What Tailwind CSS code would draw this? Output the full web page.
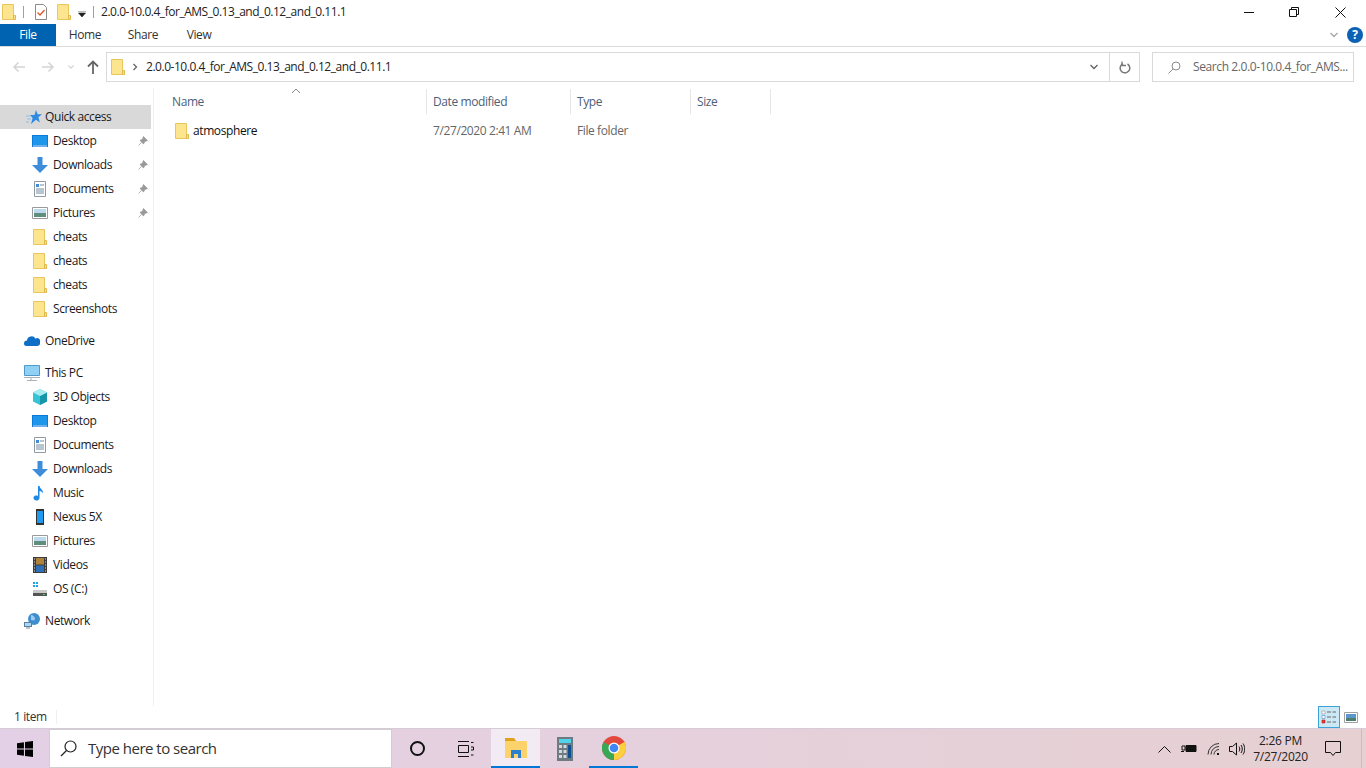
<!DOCTYPE html>
<html lang="en">
<head>
<meta charset="UTF-8">
<title>2.0.0-10.0.4_for_AMS_0.13_and_0.12_and_0.11.1</title>
<script src="https://cdn.jsdelivr.net/npm/@tailwindcss/browser@4"></script>
</head>
<body class="w-[1366px] h-[768px] overflow-hidden bg-white font-['Open_Sans','Noto_Sans',sans-serif] text-[12px] tracking-[-0.4px] text-[#1a1a1a] flex flex-col">
<svg class="hidden">
  <symbol id="folder" viewBox="0 0 16 16"><path d="M1.5.5h11v15h-11z" fill="#fde58f" stroke="#e9c65c"/><path d="M12.5 11.5h2v4h-2z" fill="#fbe08a" stroke="#e0b94e"/></symbol>
  <symbol id="desktop" viewBox="0 0 16 16"><path d="M0 2h16v12H0z" fill="#0a7bd8"/><path d="M1 3h14v9H1z" fill="#1d96ec"/><path d="M1 13h14" stroke="#d6eaf8"/></symbol>
  <symbol id="down" viewBox="0 0 16 16"><path d="M5.5 0h5v8H16l-8 8-8-8h5.500z" fill="#3d8ddb"/></symbol>
  <symbol id="docs" viewBox="0 0 16 16"><path d="M2.500.5h11v15h-11z" fill="#fff" stroke="#8f9aa3"/><path d="M4 3h3v3H4z" fill="#3d8ddb"/><path d="M8 4h4M4 8h8M4 10h8M4 12h8" stroke="#6f8ba3"/></symbol>
  <symbol id="pics" viewBox="0 0 16 16"><path d="M.5 2.500h15v11H.5z" fill="#fff" stroke="#9a9a9a"/><path d="M2 4h12v4H2z" fill="#bcd9ee"/><path d="M2 8h12v4H2z" fill="#5f8f7c"/></symbol>
  <symbol id="pin" viewBox="0 0 10 10"><path d="M5.500 0.500 9.500 4.500 8.500 5 7.500 5 6 7 5.500 8 2 4.500 3 4 5 2.500 5 1.500zM3.500 6.500 0.500 9.500" fill="#9a9a9a" stroke="#9a9a9a" stroke-width=".7"/></symbol>
  <symbol id="chev" viewBox="0 0 10 10"><path d="M1.500 3 5 6.500 8.500 3" fill="none" stroke="currentColor" stroke-width="1.400"/></symbol>
</svg>

<!-- title bar -->
<div class="h-[24px] shrink-0 flex items-center relative">
  <svg class="w-[16px] h-[16px] ml-[1px]"><use href="#folder"/></svg>
  <div class="w-px h-[12px] bg-[#a0a0a0] ml-[6px]"></div>
  <svg class="w-[16px] h-[16px] ml-[9px]" viewBox="0 0 16 16"><path d="M2.500.5h8l3 3v12h-11z" fill="#fff" stroke="#8a8a8a"/><path d="M4.500 8.500 7 11l4.500-5" fill="none" stroke="#e0562a" stroke-width="1.300"/></svg>
  <svg class="w-[16px] h-[16px] ml-[7px]"><use href="#folder"/></svg>
  <svg class="w-[8px] h-[6px] ml-[6px] mt-[3px]" viewBox="0 0 8 6"><path d="M0 0h8M.5 2h7L4 6z" fill="#222" stroke="#222" stroke-width=".6"/></svg>
  <div class="w-px h-[12px] bg-[#a0a0a0] ml-[7px]"></div>
  <span class="ml-[7px] tracking-[-0.47px] text-[#222]">2.0.0-10.0.4_for_AMS_0.13_and_0.12_and_0.11.1</span>
  <div class="ml-auto flex items-center text-[#111]">
    <svg class="w-[10px] h-[10px] mr-[35px]" viewBox="0 0 10 10"><path d="M0 5.500h10" stroke="#111"/></svg>
    <svg class="w-[10px] h-[10px] mr-[36px]" viewBox="0 0 10 10"><path d="M.5 2.500h7v7h-7zM2.500 2.500v-2h7v7h-2" fill="none" stroke="#111"/></svg>
    <svg class="w-[11px] h-[11px] mr-[20px]" viewBox="0 0 11 11"><path d="M.5.5l10 10M10.500.5l-10 10" stroke="#111"/></svg>
  </div>
</div>

<!-- ribbon tabs -->
<div class="h-[23px] shrink-0 flex items-stretch border-b border-[#dadada] relative">
  <div class="w-[56px] bg-[#0063b1] text-white flex items-center justify-center">File</div>
  <div class="w-[58px] flex items-center justify-center text-[#333]">Home</div>
  <div class="w-[58px] flex items-center justify-center text-[#333]">Share</div>
  <div class="w-[54px] flex items-center justify-center text-[#333]">View</div>
  <div class="ml-auto flex items-center pr-[3px]">
    <svg class="w-[10px] h-[10px] text-[#a8a8a8] mr-[8px]"><use href="#chev"/></svg>
    <div class="w-[16px] h-[16px] rounded-full bg-[#0b62b5] text-white flex items-center justify-center font-bold text-[12px]">?</div>
  </div>
</div>

<!-- address row -->
<div class="h-[41px] shrink-0 flex items-start pt-[5px]">
  <div class="w-[106px] h-[30px] shrink-0 flex items-center">
    <svg class="w-[14px] h-[12px] ml-[12px] text-[#d4d4d4]" viewBox="0 0 14 12"><path d="M13 6H2M6.500 1.500 2 6l4.500 4.500" fill="none" stroke="currentColor" stroke-width="1.500"/></svg>
    <svg class="w-[14px] h-[12px] ml-[15px] text-[#d4d4d4]" viewBox="0 0 14 12"><path d="M1 6h11M7.500 1.500 12 6l-4.500 4.500" fill="none" stroke="currentColor" stroke-width="1.500"/></svg>
    <svg class="w-[8px] h-[8px] ml-[12px] text-[#d4d4d4]"><use href="#chev"/></svg>
    <svg class="w-[12px] h-[14px] ml-[12px] text-[#666]" viewBox="0 0 12 14"><path d="M6 14V2M1 6.500 6 1.500l5 5" fill="none" stroke="currentColor" stroke-width="1.800"/></svg>
  </div>
  <div class="w-[1034px] h-[30px] border border-[#d9d9d9] flex items-center">
    <svg class="w-[16px] h-[16px] ml-[3px]"><use href="#folder"/></svg>
    <svg class="w-[6px] h-[8px] ml-[6px]" viewBox="0 0 6 8"><path d="M1.500 1 4.500 4l-3 3" fill="none" stroke="#666" stroke-width="1.300"/></svg>
    <span class="ml-[8px] tracking-[-0.47px] text-[#222]">2.0.0-10.0.4_for_AMS_0.13_and_0.12_and_0.11.1</span>
    <svg class="w-[10px] h-[10px] ml-auto mr-[10px] text-[#666]"><use href="#chev"/></svg>
    <div class="w-[30px] h-full border-l border-[#d9d9d9] flex items-center justify-center">
      <svg class="w-[12px] h-[13px]" viewBox="0 0 12 13"><path d="M4 2.700A4.800 4.800 0 1 0 8.500 3" fill="none" stroke="#777" stroke-width="1.500"/><path d="M3 .5v4h4" fill="none" stroke="#777" stroke-width="1.300"/></svg>
    </div>
  </div>
  <div class="w-[202px] h-[30px] ml-[12px] border border-[#d9d9d9] flex items-center">
    <svg class="w-[13px] h-[13px] ml-[15px]" viewBox="0 0 13 13"><circle cx="8" cy="5" r="4" fill="none" stroke="#8a8a8a"/><path d="M5 8 .5 12.500" stroke="#8a8a8a"/></svg>
    <span class="ml-[12px] text-[#666]">Search 2.0.0-10.0.4_for_AMS...</span>
  </div>
</div>

<!-- body -->
<div class="flex-1 flex min-h-0">
  <nav class="w-[154px] shrink-0 border-r border-[#f0f0f0] pt-[17px] text-[#1a1a1a]">
    <div class="w-[151px] h-[24px] bg-[#d9d9d9] flex items-center pl-[26px]">
      <svg class="w-[16px] h-[16px]" viewBox="0 0 16 16"><path d="M10 1l1.600 4.300H16L12.400 8.300 13.800 13.500 10 10.800 5 15 6.600 9 4 6h4.500z" fill="#2f8be0"/><path d="M0 7h4M1 10h4M0 13h3" stroke="#8cc0ee"/></svg>
      <span class="ml-[3px]">Quick access</span>
    </div>
    <div class="h-[24px] flex items-center pl-[32px]"><svg class="w-[16px] h-[16px]"><use href="#desktop"/></svg><span class="ml-[5px]">Desktop</span><svg class="w-[10px] h-[10px] ml-auto mr-[5px]"><use href="#pin"/></svg></div>
    <div class="h-[24px] flex items-center pl-[32px]"><svg class="w-[16px] h-[16px]"><use href="#down"/></svg><span class="ml-[5px]">Downloads</span><svg class="w-[10px] h-[10px] ml-auto mr-[5px]"><use href="#pin"/></svg></div>
    <div class="h-[24px] flex items-center pl-[32px]"><svg class="w-[16px] h-[16px]"><use href="#docs"/></svg><span class="ml-[5px]">Documents</span><svg class="w-[10px] h-[10px] ml-auto mr-[5px]"><use href="#pin"/></svg></div>
    <div class="h-[24px] flex items-center pl-[32px]"><svg class="w-[16px] h-[16px]"><use href="#pics"/></svg><span class="ml-[5px]">Pictures</span><svg class="w-[10px] h-[10px] ml-auto mr-[5px]"><use href="#pin"/></svg></div>
    <div class="h-[24px] flex items-center pl-[32px]"><svg class="w-[16px] h-[16px]"><use href="#folder"/></svg><span class="ml-[5px]">cheats</span></div>
    <div class="h-[24px] flex items-center pl-[32px]"><svg class="w-[16px] h-[16px]"><use href="#folder"/></svg><span class="ml-[5px]">cheats</span></div>
    <div class="h-[24px] flex items-center pl-[32px]"><svg class="w-[16px] h-[16px]"><use href="#folder"/></svg><span class="ml-[5px]">cheats</span></div>
    <div class="h-[24px] flex items-center pl-[32px]"><svg class="w-[16px] h-[16px]"><use href="#folder"/></svg><span class="ml-[5px]">Screenshots</span></div>

    <div class="h-[24px] mt-[8px] flex items-center pl-[24px]">
      <svg class="w-[16px] h-[16px]" viewBox="0 0 16 16"><path d="M0 10.500A3 3 0 0 1 3 7.500 4.500 4.500 0 0 1 11.500 5.800 3 3 0 0 1 16 9.500 2.800 2.800 0 0 1 13.500 13H2.500A2.500 2.500 0 0 1 0 10.500z" fill="#0f6fc6"/></svg>
      <span class="ml-[5px]">OneDrive</span>
    </div>

    <div class="h-[24px] mt-[8px] flex items-center pl-[24px]">
      <svg class="w-[16px] h-[16px]" viewBox="0 0 16 16"><path d="M.5.500h15v10H.5z" fill="#8fd0f5" stroke="#4e9bc9"/><path d="M0 12.500h16M7 13v2M3 15.500h10" stroke="#a5b4bd"/></svg>
      <span class="ml-[5px]">This PC</span>
    </div>
    <div class="h-[24px] flex items-center pl-[32px]"><svg class="w-[16px] h-[16px]" viewBox="0 0 16 16"><path d="M8 0l7 3.500v9L8 16l-7-3.500v-9z" fill="#35c3d6"/><path d="M8 7l7-3.500v9L8 16z" fill="#1795ab"/><path d="M8 0l7 3.500L8 7 1 3.500z" fill="#a8ecf2"/></svg><span class="ml-[5px]">3D Objects</span></div>
    <div class="h-[24px] flex items-center pl-[32px]"><svg class="w-[16px] h-[16px]"><use href="#desktop"/></svg><span class="ml-[5px]">Desktop</span></div>
    <div class="h-[24px] flex items-center pl-[32px]"><svg class="w-[16px] h-[16px]"><use href="#docs"/></svg><span class="ml-[5px]">Documents</span></div>
    <div class="h-[24px] flex items-center pl-[32px]"><svg class="w-[16px] h-[16px]"><use href="#down"/></svg><span class="ml-[5px]">Downloads</span></div>
    <div class="h-[24px] flex items-center pl-[32px]"><svg class="w-[16px] h-[16px]" viewBox="0 0 16 16"><path d="M6 1h1.500c.5 3 4 3.500 3.500 7.500C10.500 7 9 6 7.500 6v7a3 2.500 0 1 1-1.500-2.200z" fill="#1e88e5"/></svg><span class="ml-[5px]">Music</span></div>
    <div class="h-[24px] flex items-center pl-[32px]"><svg class="w-[16px] h-[16px]" viewBox="0 0 16 16"><path d="M4 0h8v16H4z" fill="#333"/><path d="M5 2h6v12H5z" fill="#1e9bf0"/></svg><span class="ml-[5px]">Nexus 5X</span></div>
    <div class="h-[24px] flex items-center pl-[32px]"><svg class="w-[16px] h-[16px]"><use href="#pics"/></svg><span class="ml-[5px]">Pictures</span></div>
    <div class="h-[24px] flex items-center pl-[32px]"><svg class="w-[16px] h-[16px]" viewBox="0 0 16 16"><path d="M1 0h14v16H1z" fill="#3c3c3c"/><path d="M4 1h8v6.500H4z" fill="#b0823c"/><path d="M4 8.500h8V15H4z" fill="#2f6fb5"/><path d="M2 2h1M2 5h1M2 8h1M2 11h1M2 14h1M13 2h1M13 5h1M13 8h1M13 11h1M13 14h1" stroke="#ddd"/></svg><span class="ml-[5px]">Videos</span></div>
    <div class="h-[24px] flex items-center pl-[32px]"><svg class="w-[16px] h-[16px]" viewBox="0 0 16 16"><path d="M1 1h2v2H1zM4 1h2v2H4zM1 4h2v2H1zM4 4h2v2H4z" fill="#19a6e8"/><path d="M1 9h14v3H1z" fill="#c9c9c9"/><path d="M1 12h14v3H1z" fill="#555"/><path d="M11 13h2v1h-2z" fill="#3fd24f"/></svg><span class="ml-[5px]">OS (C:)</span></div>

    <div class="h-[24px] mt-[8px] flex items-center pl-[24px]">
      <svg class="w-[16px] h-[16px]" viewBox="0 0 16 16"><circle cx="10" cy="6" r="6" fill="#3f8fd0"/><path d="M7 2c2 0 4 2 4 4s-2 1-4 1z" fill="#9ccbee"/><path d="M0 9h8v5H0z" fill="#5a7f9e"/><path d="M1 10h6v3H1z" fill="#a9d6f2"/><path d="M2 15h4" stroke="#788"/></svg>
      <span class="ml-[5px]">Network</span>
    </div>
  </nav>

  <main class="flex-1 min-w-0 flex flex-col">
    <div class="h-[25px] flex mt-[1px] text-[#4c607a]">
      <div class="w-[273px] border-r border-[#e5e5e5] pl-[18px] flex items-center relative">
        Name
        <svg class="w-[10px] h-[6px] absolute left-[137px] -top-[1px]" viewBox="0 0 10 6"><path d="M1 5l4-4 4 4" fill="none" stroke="#888"/></svg>
      </div>
      <div class="w-[144px] border-r border-[#e5e5e5] pl-[6px] flex items-center">Date modified</div>
      <div class="w-[120px] border-r border-[#e5e5e5] pl-[6px] flex items-center">Type</div>
      <div class="w-[80px] border-r border-[#e5e5e5] pl-[6px] flex items-center">Size</div>
    </div>
    <div class="h-[22px] mt-[6px] flex items-center">
      <div class="w-[273px] flex items-center pl-[20px]"><svg class="w-[16px] h-[16px]"><use href="#folder"/></svg><span class="ml-[3px] text-[#111]">atmosphere</span></div>
      <div class="w-[144px] pl-[6px] text-[#666]">7/27/2020 2:41 AM</div>
      <div class="w-[120px] pl-[6px] text-[#666]">File folder</div>
    </div>
  </main>
</div>

<!-- status bar -->
<div class="h-[22px] shrink-0 flex items-center">
  <span class="ml-[14px] text-[#333]">1 item</span>
  <div class="w-px h-[14px] bg-[#f0f0f0] ml-[9px]"></div>
  <div class="ml-auto flex items-center mr-[8px]">
    <div class="w-[22px] h-[22px] bg-[#cce8f5] border border-[#3ba3d8] flex items-center justify-center">
      <svg class="w-[16px] h-[14px]" viewBox="0 0 16 14"><path d="M1 1h3v3H1z" fill="#fff" stroke="#999" stroke-width=".6"/><path d="M1 5.500h3v3H1z" fill="#fff" stroke="#4a90d0" stroke-width=".6"/><path d="M1 10h3v3H1z" fill="#e03c31" stroke="#b22" stroke-width=".6"/><path d="M6 2h4M11.500 2H15M6 7h4M11.500 7H15M6 12h4M11.500 12H15" stroke="#666"/></svg>
    </div>
    <svg class="w-[14px] h-[11px] ml-[4px]" viewBox="0 0 14 11"><path d="M.5.5h13v10H.5z" fill="#fff" stroke="#a0a0a0"/><path d="M2 2h10v4H2z" fill="#5c96cc"/><path d="M2 6h10v3H2z" fill="#4b7f6b"/></svg>
  </div>
</div>

<!-- taskbar -->
<footer class="h-[40px] shrink-0 flex items-stretch bg-gradient-to-r from-[#e4d0e6] to-[#e6d0d2] border-t border-[#d8cbd8]">
  <div class="w-[49px] flex items-center justify-center">
    <svg class="w-[16px] h-[16px]" viewBox="0 0 15 15"><path d="M0 2.200 6.500 1.200V7H0zM7.500 1 15 0v7H7.500zM0 8h6.500v5.800L0 12.800zM7.500 8H15v7l-7.500-1z" fill="#000"/></svg>
  </div>
  <div class="w-[343px] bg-white border border-[#cfcfcf] flex items-center">
    <svg class="w-[17px] h-[17px] ml-[10px]" viewBox="0 0 17 17"><circle cx="10.500" cy="6.500" r="5.500" fill="none" stroke="#222" stroke-width="1.200"/><path d="M6.500 10.500 1 16" stroke="#222" stroke-width="1.200"/></svg>
    <span class="ml-[11px] text-[15px] tracking-[-0.5px] text-[#333]">Type here to search</span>
  </div>
  <div class="w-[50px] flex items-center justify-center">
    <div class="w-[15px] h-[15px] rounded-full border-[2.500px] border-[#111]"></div>
  </div>
  <div class="w-[49px] flex items-center justify-center pr-[3px]">
    <svg class="w-[17px] h-[16px]" viewBox="0 0 17 16"><path d="M1 .5h11M1 15.500h11M1.500 4.500h10v7h-10zM14 1.500h2.500M14 6h2.500v3H14M14 14h2.500" fill="none" stroke="#111"/></svg>
  </div>
  <div class="w-[49px] bg-[#f3ebf4] border-b-[2px] border-[#0078d7] flex items-center justify-center pt-[1px]">
    <svg class="w-[22px] h-[20px]" viewBox="0 0 22 20"><path d="M0 0h9l2 3h11v17H0z" fill="#fcd36a"/><path d="M0 0h9l2 3H0z" fill="#dfa21c"/><path d="M6 12h10v8h-3v-4H9v4H6z" fill="#2a7fcf"/></svg>
  </div>
  <div class="w-[49px] flex items-center justify-center">
    <svg class="w-[16px] h-[24px]" viewBox="0 0 16 24"><path d="M0 0h16v24H0z" fill="#6f7b82"/><path d="M2 2h12v4H2z" fill="#4fd5ea"/><path d="M2 8h3v3H2zM6.500 8h3v3h-3zM2 13h3v3H2zM6.500 13h3v3h-3zM2 18h3v3H2zM6.500 18h3v3h-3z" fill="#d4d9dc"/><path d="M11 8h3v13h-3z" fill="#0f4f8f"/></svg>
  </div>
  <div class="w-[49px] border-b-[2px] border-[#0078d7] flex items-center justify-center pt-[1px]">
    <svg class="w-[24px] h-[24px]" viewBox="0 0 24 24"><circle cx="12" cy="12" r="12" fill="#e3483c"/><path d="M12 12 22.400 6A12 12 0 0 1 12 24z" fill="#fbcf3d"/><path d="M12 12 12 24A12 12 0 0 1 1.600 6z" fill="#3aa757"/><circle cx="12" cy="12" r="5.500" fill="#fff"/><circle cx="12" cy="12" r="4.300" fill="#4285f4"/></svg>
  </div>
  <div class="ml-auto flex items-center">
    <svg class="w-[13px] h-[8px] mr-[10px]" viewBox="0 0 13 8"><path d="M.5 7.500l6-6 6 6" fill="none" stroke="#111"/></svg>
    <svg class="w-[16px] h-[11px] mr-[10px]" viewBox="0 0 16 11"><path d="M5 2.500h10v6H5z" fill="#111" stroke="#111"/><path d="M1 3h3v4H1zM0 8.500h3" fill="none" stroke="#111"/></svg>
    <svg class="w-[14px] h-[13px] mr-[8px]" viewBox="0 0 14 13"><path d="M1 12.500A11 11 0 0 1 12 1.500M4 12.500A8 8 0 0 1 12 4.500M7 12.500A5 5 0 0 1 12 7.500" fill="none" stroke="#333"/><path d="M10 11h2v2h-2z" fill="#111"/></svg>
    <svg class="w-[16px] h-[14px] mr-[5px]" viewBox="0 0 16 14"><path d="M.5 4.500h3L7.500 1v12l-4-3.500h-3z" fill="none" stroke="#111"/><path d="M10 4.500c1 1.500 1 3.500 0 5M12 3c1.700 2.300 1.700 5.700 0 8M14 1.500c2.300 3.300 2.300 7.700 0 11" fill="none" stroke="#111"/></svg>
    <div class="w-[61px] text-center text-[12px] tracking-[-0.25px] leading-[16px] text-[#222]"><div>2:26 PM</div><div>7/27/2020</div></div>
    <svg class="w-[16px] h-[15px] ml-[14px] mr-[20px]" viewBox="0 0 16 15"><path d="M.5.5h15v11h-5L8 14.500 5.500 11.500h-5z" fill="none" stroke="#111"/></svg>
    <div class="w-px h-full bg-[#c8bcbc] mr-[4px]"></div>
  </div>
</footer>
</body>
</html>
